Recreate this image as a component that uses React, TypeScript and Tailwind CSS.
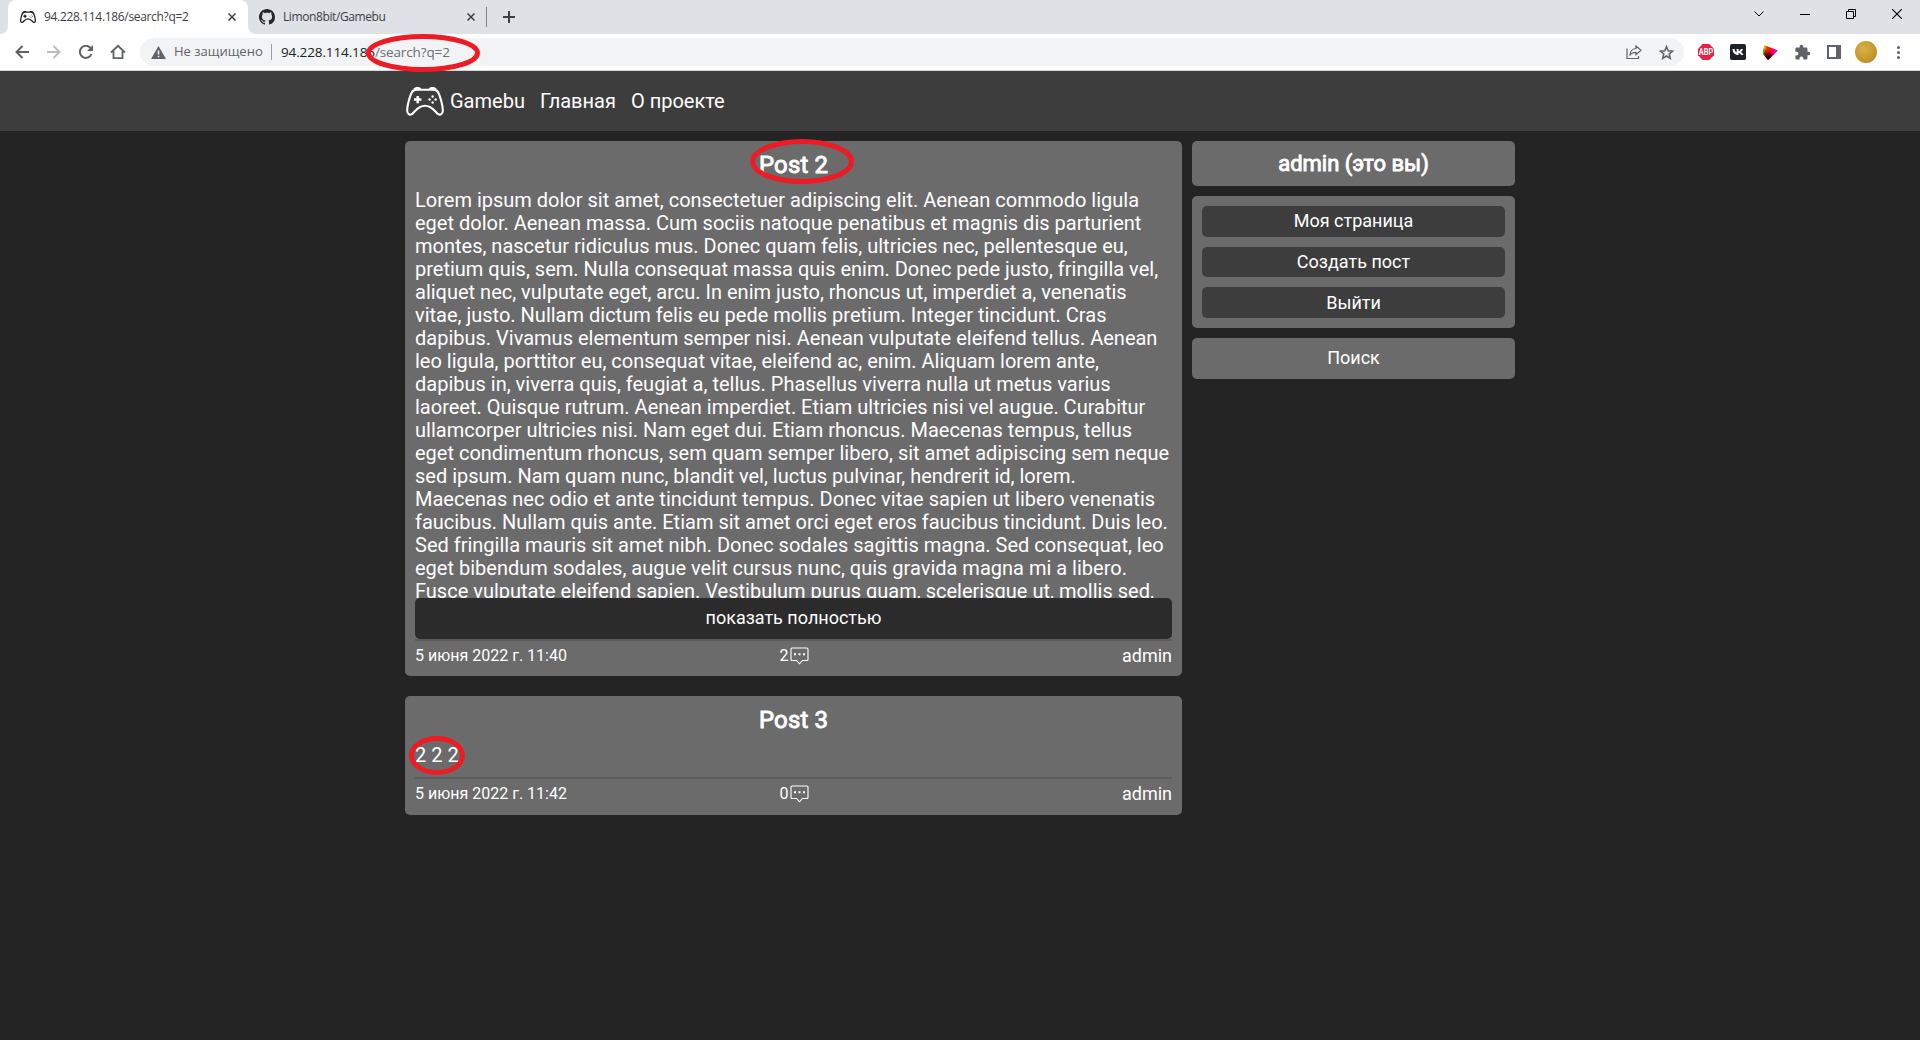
import React from "react";

const LINES = [
  "Lorem ipsum dolor sit amet, consectetuer adipiscing elit. Aenean commodo ligula",
  "eget dolor. Aenean massa. Cum sociis natoque penatibus et magnis dis parturient",
  "montes, nascetur ridiculus mus. Donec quam felis, ultricies nec, pellentesque eu,",
  "pretium quis, sem. Nulla consequat massa quis enim. Donec pede justo, fringilla vel,",
  "aliquet nec, vulputate eget, arcu. In enim justo, rhoncus ut, imperdiet a, venenatis",
  "vitae, justo. Nullam dictum felis eu pede mollis pretium. Integer tincidunt. Cras",
  "dapibus. Vivamus elementum semper nisi. Aenean vulputate eleifend tellus. Aenean",
  "leo ligula, porttitor eu, consequat vitae, eleifend ac, enim. Aliquam lorem ante,",
  "dapibus in, viverra quis, feugiat a, tellus. Phasellus viverra nulla ut metus varius",
  "laoreet. Quisque rutrum. Aenean imperdiet. Etiam ultricies nisi vel augue. Curabitur",
  "ullamcorper ultricies nisi. Nam eget dui. Etiam rhoncus. Maecenas tempus, tellus",
  "eget condimentum rhoncus, sem quam semper libero, sit amet adipiscing sem neque",
  "sed ipsum. Nam quam nunc, blandit vel, luctus pulvinar, hendrerit id, lorem.",
  "Maecenas nec odio et ante tincidunt tempus. Donec vitae sapien ut libero venenatis",
  "faucibus. Nullam quis ante. Etiam sit amet orci eget eros faucibus tincidunt. Duis leo.",
  "Sed fringilla mauris sit amet nibh. Donec sodales sagittis magna. Sed consequat, leo",
  "eget bibendum sodales, augue velit cursus nunc, quis gravida magna mi a libero.",
  "Fusce vulputate eleifend sapien. Vestibulum purus quam, scelerisque ut, mollis sed,",
];

function Gamepad({ className, stroke = 2.1 }: { className: string; stroke?: number }) {
  return (
    <svg className={className} viewBox="0 0 38 29" fill="none" stroke="currentColor" strokeWidth={stroke} strokeLinecap="round" strokeLinejoin="round">
      <path d="M7 3.600C4.200 7 .9 19 1.200 24c.2 2.800 2.300 4.400 4.600 3.100C8.500 25.500 11.500 18.800 19 18.800s10.500 6.700 13.200 8.300c2.300 1.300 4.400-.3 4.600-3.100C37.100 19 33.800 7 31 3.600" />
      <path d="M6.600 4.200C8 2.700 10.500 2.600 13 2.700h12c2.500-.1 5 0 6.400 1.500M8.500 2C10 .9 12.500.8 14 1.800M29.500 2C28 .9 25.500.8 24 1.800" />
      <path d="M8 12.600h7.400M11.700 8.900v7.400" strokeLinecap="butt" strokeWidth={stroke * 1.2} />
      <g fill="currentColor" stroke="none">
        <circle cx="26.600" cy="9.500" r="1.200" />
        <circle cx="26.600" cy="15.500" r="1.200" />
        <circle cx="23.600" cy="12.500" r="1.200" />
        <circle cx="29.600" cy="12.500" r="1.200" />
      </g>
    </svg>
  );
}

function Cross({ className }: { className: string }) {
  return (
    <svg className={className} viewBox="0 0 8 8" stroke="currentColor" strokeWidth="1.500">
      <path d="M.5.5l7 7M7.500.5l-7 7" />
    </svg>
  );
}

function Ring({ className, w, h }: { className: string; w: number; h: number }) {
  return (
    <svg className={className} width={w} height={h} viewBox={`0 0 ${w} ${h}`} fill="none">
      <ellipse cx={w / 2} cy={h / 2} rx={w / 2 - 2.5} ry={h / 2 - 2.5} stroke="#ed1c24" strokeWidth="5" />
    </svg>
  );
}

function TabStrip() {
  return (
    <div className="flex h-[34px] items-end bg-[#dee1e6] text-[#3c4043]">
      <div className="flex h-[34px] w-[256px] shrink-0 text-white">
        <svg className="h-[34px] w-2 shrink-0" viewBox="0 0 8 34" fill="currentColor"><path d="M8 26v8H0c4.500 0 8-3.500 8-8z" /></svg>
        <div className="flex h-[34px] w-[240px] items-center rounded-t-lg bg-white pl-[12px] text-[#3c4043]">
          <Gamepad className="h-[12px] w-4 shrink-0 text-[#202124]" stroke={3} />
          <span className="ml-[8px] w-[184px] whitespace-nowrap font-['Open_Sans',sans-serif] text-[12px] leading-[16px] tracking-[-0.33px]">94.228.114.186/search?q=2</span>
          <Cross className="size-2 shrink-0" />
        </div>
        <svg className="h-[34px] w-2 shrink-0" viewBox="0 0 8 34" fill="currentColor"><path d="M0 26v8h8c-4.500 0-8-3.500-8-8z" /></svg>
      </div>
      <div className="flex h-[34px] items-center pl-[3px]">
        <svg className="size-4" viewBox="0 0 16 16" fill="#24292f"><path d="M8 0C3.580 0 0 3.580 0 8c0 3.540 2.290 6.530 5.470 7.590.4.070.55-.17.55-.38 0-.19-.01-.82-.01-1.490-2.010.37-2.530-.49-2.690-.94-.09-.23-.48-.94-.82-1.130-.28-.15-.68-.52-.01-.53.63-.01 1.080.58 1.230.82.72 1.210 1.870.87 2.330.66.070-.52.28-.87.51-1.070-1.780-.2-3.640-.89-3.640-3.950 0-.87.31-1.590.82-2.150-.08-.2-.36-1.020.08-2.120 0 0 .67-.21 2.200.82.64-.18 1.320-.27 2-.27s1.360.09 2 .27c1.530-1.040 2.200-.82 2.200-.82.44 1.100.16 1.920.08 2.120.51.56.82 1.270.82 2.150 0 3.070-1.870 3.750-3.650 3.950.29.25.54.73.54 1.480 0 1.070-.01 1.930-.01 2.200 0 .21.15.46.55.38A8.010 8.010 0 0 0 16 8c0-4.420-3.580-8-8-8z" /></svg>
        <span className="ml-[8px] w-[184px] whitespace-nowrap font-['Open_Sans',sans-serif] text-[12px] leading-[16px] tracking-[-0.4px]">Limon8bit/Gamebu</span>
        <Cross className="size-2" />
        <div className="ml-[11px] h-5 w-px bg-[#808388]" />
        <svg className="ml-[16px] size-3" viewBox="0 0 12 12" stroke="#3c4043" strokeWidth="2"><path d="M6 0v12M0 6h12" /></svg>
      </div>
      <div className="ml-auto flex h-[28px] self-start text-black">
        <div className="flex w-[46px] items-center justify-center"><svg className="h-[6px] w-[10px]" viewBox="0 0 10 6" fill="none" stroke="currentColor"><path d="M.5.5L5 5 9.500.5" /></svg></div>
        <div className="flex w-[46px] items-center justify-center"><div className="h-px w-[10px] bg-black" /></div>
        <div className="flex w-[46px] items-center justify-center"><svg className="size-[10px]" viewBox="0 0 10 10" fill="none" stroke="currentColor"><path d="M.5 2.500h7v7h-7zM2.500 2.500v-2h7v7h-2" /></svg></div>
        <div className="flex w-[46px] items-center justify-center"><svg className="size-[10px]" viewBox="0 0 10 10" stroke="currentColor" strokeWidth="1.100"><path d="M0 0l10 10M10 0L0 10" /></svg></div>
      </div>
    </div>
  );
}

function Slot({ className = "w-8", children }: { className?: string; children: React.ReactNode }) {
  return <div className={`flex h-7 shrink-0 items-center justify-center ${className}`}>{children}</div>;
}

function Toolbar() {
  return (
    <div className="flex h-9 items-center bg-white text-[#5f6368]">
      <div className="flex pl-[6px]">
        <Slot><svg className="size-[14px]" viewBox="0 0 14 14" fill="none" stroke="currentColor" strokeWidth="2"><path d="M14 7H1.500M7.500 1L1.500 7l6 6" /></svg></Slot>
        <Slot className="w-8 text-[#babcbe]"><svg className="size-[14px]" viewBox="0 0 14 14" fill="none" stroke="currentColor" strokeWidth="2"><path d="M0 7h12.500M6.500 1l6 6-6 6" /></svg></Slot>
        <Slot><svg className="size-[14px]" viewBox="0 0 14 14" fill="none" stroke="currentColor" strokeWidth="2"><path d="M12.500 9A6 6 0 1 1 11.300 2.800L13 4.500" /><path d="M14 0v6H8z" fill="currentColor" stroke="none" /></svg></Slot>
        <Slot><svg className="size-4" viewBox="0 0 16 16" fill="none" stroke="currentColor" strokeWidth="1.800"><path d="M1 8.500L8 1.800l7 6.700M3.500 7v7.200h9V7" /></svg></Slot>
      </div>
      <div className="ml-[6px] flex h-7 w-[1544px] items-center rounded-full bg-[#f1f3f4] pr-[2px] font-['Open_Sans',sans-serif]">
        <svg className="ml-[11px] h-[13px] w-[15px] shrink-0" viewBox="0 0 15 13" fill="currentColor"><path fillRule="evenodd" d="M7.500 0L15 13H0zM6.700 4.500v4h1.600v-4zM6.700 9.700v1.600h1.600V9.700z" /></svg>
        <span className="ml-[8px] w-[97px] whitespace-nowrap text-[13px]">Не защищено</span>
        <div className="h-4 w-px bg-[#9aa0a6]" />
        <span className="ml-[9px] whitespace-nowrap text-[13.500px] tracking-[-0.12px] text-[#202124]">94.228.114.186<span className="text-[#6b6f74]">/search?q=2</span></span>
        <Slot className="ml-auto w-8"><svg className="size-[16px]" viewBox="0 0 16 16" fill="none" stroke="currentColor" strokeWidth="1.200"><path d="M1 4.500v10h11.500V12M10 2l5 4.300-5 4.300V8.300C7 8.300 5 9.200 3.800 11.500 4 7.500 6.500 4.800 10 4.500z" /></svg></Slot>
        <Slot><svg className="size-[15px]" viewBox="0 0 16 16" fill="none" stroke="currentColor" strokeWidth="1.700"><path d="M8 1.800l1.800 4.300 4.700.4-3.600 3.100 1.100 4.600L8 11.700l-4 2.500 1.100-4.600L1.500 6.500l4.700-.4z" /></svg></Slot>
      </div>
      <div className="ml-[6px] flex">
        <Slot><svg className="size-4" viewBox="0 0 16 16"><path d="M4.700 0h6.600L16 4.700v6.600L11.300 16H4.700L0 11.300V4.700z" fill="#ed1e45" /><text x="8" y="11" textAnchor="middle" textLength="14.500" lengthAdjust="spacingAndGlyphs" fontFamily="Roboto, sans-serif" fontWeight="700" fontSize="8.500" fill="#fff">ABP</text></svg></Slot>
        <Slot><svg className="size-4" viewBox="0 0 16 16"><rect width="16" height="16" rx="1.800" fill="#1f2128" /><path d="M2.500 5h2c.2 2 1.200 3.100 2.100 3.400V5h2v2.200c1-.1 1.900-1.100 2.300-2.200h2c-.3 1.400-1.200 2.400-2 2.900.8.400 1.900 1.300 2.400 3.100h-2.100c-.4-1.100-1.300-1.900-2.600-2.100V11C5.200 11.200 2.600 9 2.500 5z" fill="#fff" /></svg></Slot>
        <Slot>
          <svg className="size-[15px]" viewBox="0 0 15 15">
            <defs>
              <linearGradient id="gamutHue" x1="0" y1="0" x2="1" y2="0.25">
                <stop offset="0.05" stopColor="#e8ff00" />
                <stop offset="0.3" stopColor="#ff3000" />
                <stop offset="0.6" stopColor="#ff0020" />
                <stop offset="0.95" stopColor="#f000ff" />
              </linearGradient>
              <linearGradient id="gamutShade" x1="0.6" y1="0.3" x2="0.35" y2="1">
                <stop offset="0.15" stopColor="#000" stopOpacity="0" />
                <stop offset="0.9" stopColor="#000" />
              </linearGradient>
            </defs>
            <path d="M1 0L15 5.500 5 15 0 9z" fill="url(#gamutHue)" />
            <path d="M1 0L15 5.500 5 15 0 9z" fill="url(#gamutShade)" />
            <path d="M.9 3.500L.5 9l1.500 1.500" stroke="#20d030" fill="none" />
          </svg>
        </Slot>
        <Slot><svg className="size-[17px]" viewBox="0 0 24 24" fill="currentColor"><path d="M20.500 11H19V7c0-1.100-.9-2-2-2h-4V3.500a2.500 2.500 0 0 0-5 0V5H4c-1.100 0-2 .9-2 2v3.800h1.500a2.700 2.700 0 0 1 0 5.400H2V20c0 1.100.9 2 2 2h3.800v-1.500a2.700 2.700 0 0 1 5.400 0V22H17c1.100 0 2-.9 2-2v-4h1.500a2.500 2.500 0 0 0 0-5z" /></svg></Slot>
        <Slot><div className="size-[14px] border-2 border-r-[5px] border-[#5f6368]" /></Slot>
        <Slot><div className="size-[22px] rounded-full bg-[radial-gradient(circle_at_40%_35%,#d8b04a,#c79a2c_55%,#a87c1c)]" /></Slot>
        <Slot><svg className="h-[13px] w-[3px]" viewBox="0 0 3 13" fill="currentColor"><circle cx="1.500" cy="1.500" r="1.500" /><circle cx="1.500" cy="6.500" r="1.500" /><circle cx="1.500" cy="11.500" r="1.500" /></svg></Slot>
      </div>
    </div>
  );
}

function Footer({ date, count }: { date: string; count: number }) {
  return (
    <div className="grid grid-cols-3 border-t-2 border-[#5c5c5c] pt-[3px] leading-[23px]">
      <span className="text-[16px]">{date}</span>
      <span className="flex items-center justify-center pl-[2px] text-[16px]">
        {count}
        <svg className="ml-[2px] h-[18px] w-[19px]" viewBox="0 0 19 18" fill="none" stroke="currentColor" strokeWidth="1.100">
          <path d="M2 1h15q1 0 1 1v10.500q0 1-1 1h-4.500L9.500 16.800l-3-3.300H2q-1 0-1-1V2q0-1 1-1z" />
          <path d="M4 7.200h2M8.500 7.200h2M13 7.200h2" strokeWidth="2" />
        </svg>
      </span>
      <span className="text-right text-[18px]">admin</span>
    </div>
  );
}

function Title({ children }: { children: React.ReactNode }) {
  return <h2 className="text-center text-[24px] leading-[28px] tracking-[0.1px] [-webkit-text-stroke:0.9px_white]">{children}</h2>;
}

function MenuButton({ children }: { children: React.ReactNode }) {
  return <div className="flex h-[30.7px] items-center justify-center rounded-[5px] bg-[#3d3d3d] pb-px leading-[21px]">{children}</div>;
}

export default function App() {
  return (
    <div className="relative h-[1040px] w-[1920px] overflow-hidden bg-[#242424] font-['Roboto',sans-serif] text-white">
      <TabStrip />
      <Toolbar />
      <div className="h-px bg-[#d5d7da]" />
      <header className="flex h-[60px] items-center bg-[#3d3d3d] pl-[406px] text-[20px] leading-[24px]">
        <Gamepad className="h-[29px] w-[38px]" />
        <span className="ml-[6px]">Gamebu</span>
        <span className="ml-[15px]">Главная</span>
        <span className="ml-[15px]">О проекте</span>
      </header>
      <main className="flex items-start gap-[10px] pl-[405px] pt-[10px]">
        <div className="flex w-[777px] flex-col gap-5">
          <article className="h-[535px] rounded-[5px] bg-[#6b6b6b] p-[10px]">
            <Title>Post 2</Title>
            <div className="mt-[10px] h-[409px] overflow-hidden text-[20px] leading-[23px]">
              {LINES.map((line) => <p key={line} className="whitespace-nowrap">{line}</p>)}
            </div>
            <div className="flex h-[41px] items-center justify-center rounded-[5px] bg-[#2b2b2b] pb-[2px] text-[18px] leading-[21px]">показать полностью</div>
            <Footer date="5 июня 2022 г. 11:40" count={2} />
          </article>
          <article className="h-[119px] rounded-[5px] bg-[#6b6b6b] p-[10px]">
            <Title>Post 3</Title>
            <p className="mt-[10px] h-[33px] text-[20px] leading-[23px]">2 2 2</p>
            <Footer date="5 июня 2022 г. 11:42" count={0} />
          </article>
        </div>
        <aside className="flex w-[323px] flex-col gap-[10px] text-[18px] leading-[21px]">
          <div className="flex h-[45px] items-center justify-center rounded-[5px] bg-[#6b6b6b]">
            <h2 className="text-[22px] leading-[25px] [-webkit-text-stroke:0.9px_white]">admin (это вы)</h2>
          </div>
          <div className="flex h-[132px] flex-col gap-[10px] rounded-[5px] bg-[#6b6b6b] p-[10px]">
            <MenuButton>Моя страница</MenuButton>
            <MenuButton>Создать пост</MenuButton>
            <MenuButton>Выйти</MenuButton>
          </div>
          <div className="flex h-[41px] items-center justify-center rounded-[5px] bg-[#6b6b6b] pb-[2px]">Поиск</div>
        </aside>
      </main>
      <Ring className="absolute left-[366px] top-[34px]" w={114} h={38} />
      <Ring className="absolute left-[750px] top-[139px]" w={104} h={45} />
      <Ring className="absolute left-[409px] top-[736px]" w={56} h={39} />
    </div>
  );
}
